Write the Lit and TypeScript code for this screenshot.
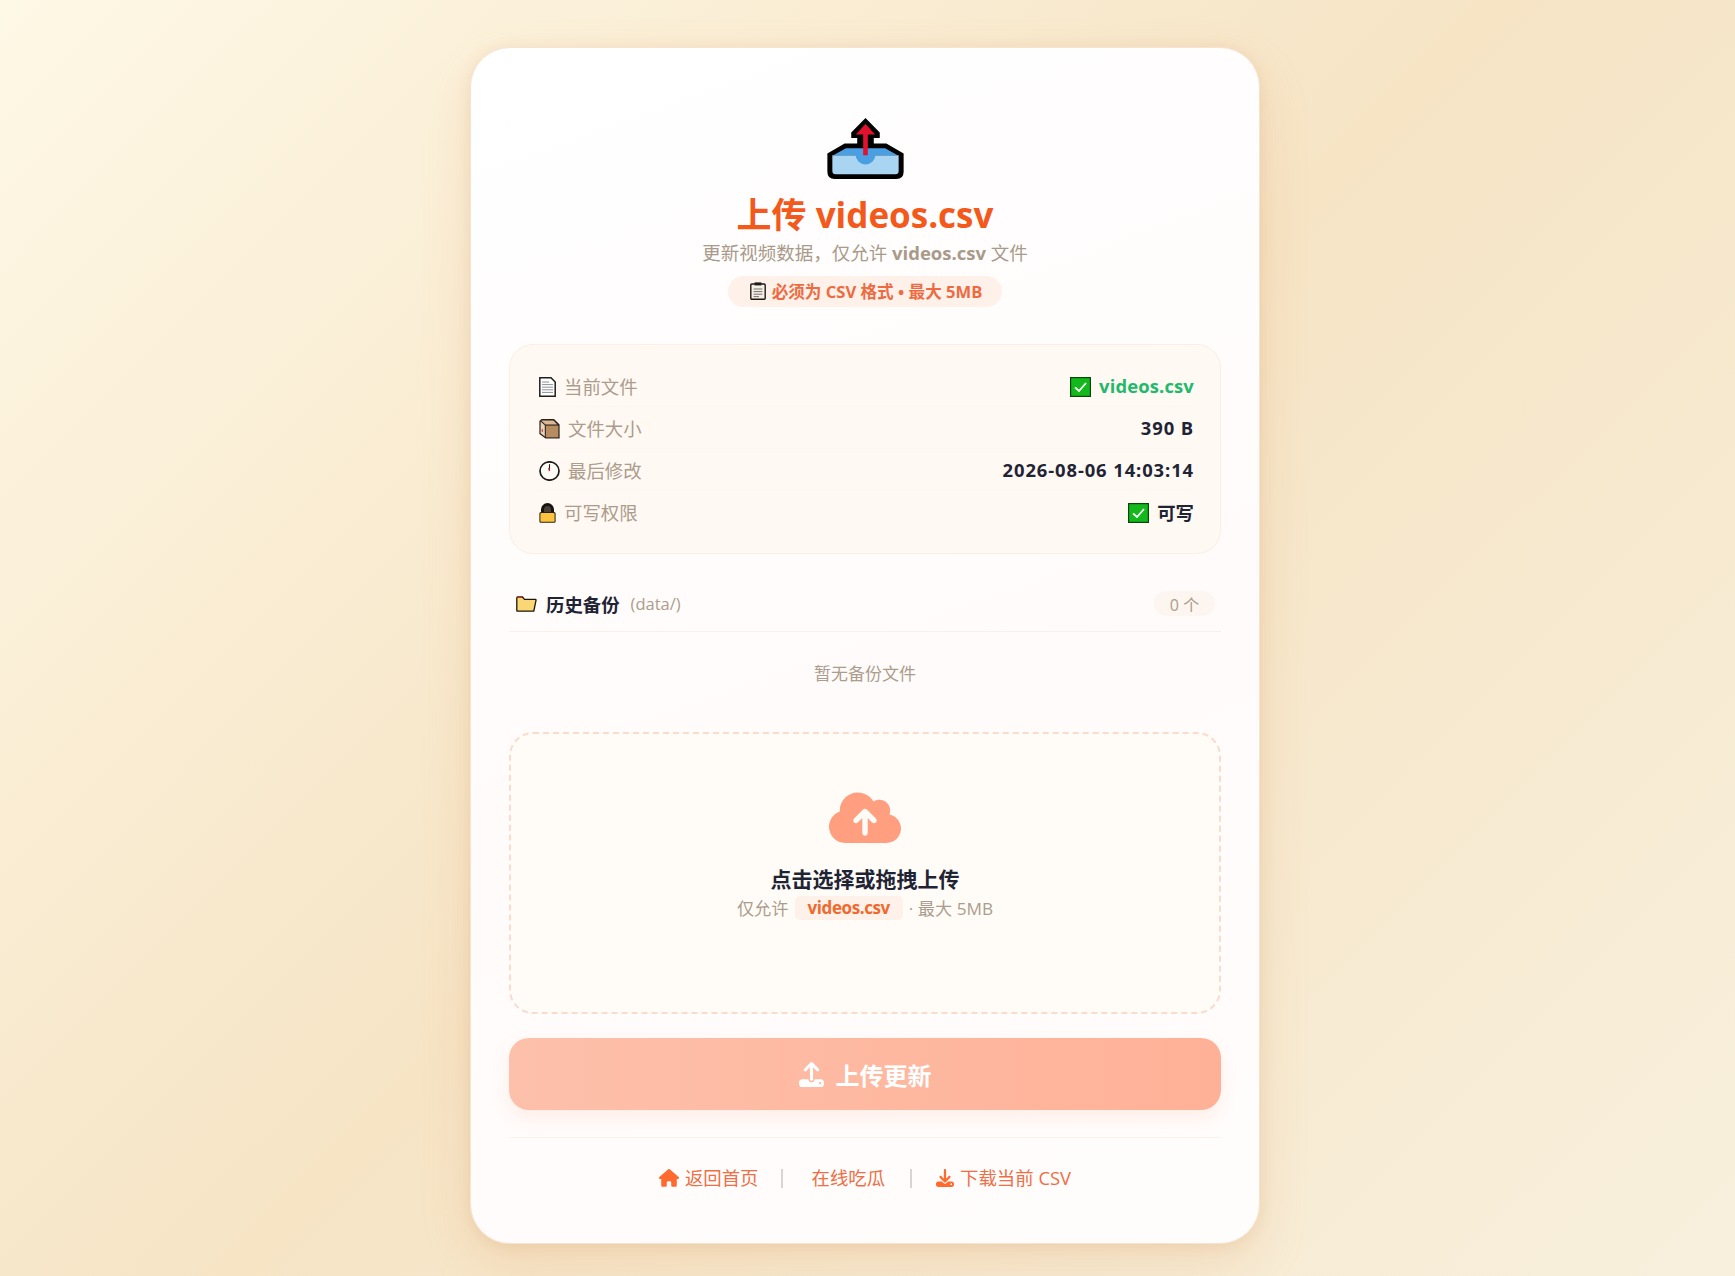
import { LitElement, html, css, svg } from "lit";
import { customElement } from "lit/decorators.js";

const fa = (vb: string, d: string, cls: string) =>
  html`<svg class=${cls} viewBox=${vb} fill="currentColor" aria-hidden="true">${svg`<path d=${d}></path>`}</svg>`;

const CLOUD = "M144 480C64.5 480 0 415.5 0 336c0-62.8 40.2-116.2 96.3-135.9c-.2-2.7-.3-5.3-.3-8.1c0-88.4 71.6-160 160-160c59.3 0 111 32.2 138.7 80.2C409.9 102 428.3 96 448 96c53 0 96 43 96 96c0 12.2-2.3 23.8-6.4 34.6C596 238.4 640 290.1 640 352c0 70.7-57.3 128-128 128H144zm79-217c-9.4 9.4-9.4 24.6 0 33.9s24.6 9.4 33.9 0l39-39V392c0 13.3 10.7 24 24 24s24-10.7 24-24V257.9l39 39c9.4 9.4 24.6 9.4 33.9 0s9.4-24.6 0-33.9l-80-80c-9.4-9.4-24.6-9.4-33.9 0l-80 80z";
const HOME = "M575.8 255.5c0 18-15 32.1-32 32.1h-32l.7 160.2c0 2.7-.2 5.4-.5 8.1V472c0 22.1-17.9 40-40 40H456c-1.1 0-2.2 0-3.3-.1c-1.4 .1-2.8 .1-4.2 .1H416 392c-22.1 0-40-17.9-40-40V448 384c0-17.7-14.3-32-32-32H256c-17.7 0-32 14.3-32 32v64 24c0 22.1-17.9 40-40 40H160 128.1c-1.5 0-3-.1-4.5-.2c-1.2 .1-2.4 .2-3.6 .2H104c-22.1 0-40-17.9-40-40V360c0-.9 0-1.9 .1-2.8V287.6H32c-18 0-32-14-32-32.1c0-9 3-17 10-24L266.4 8c7-7 15-8 22-8s15 2 21 7L564.8 231.5c8 7 12 15 11 24z";
const DOWNLOAD = "M288 32c0-17.7-14.3-32-32-32s-32 14.3-32 32V274.7l-73.4-73.4c-12.5-12.5-32.8-12.5-45.3 0s-12.5 32.8 0 45.3l128 128c12.5 12.5 32.8 12.5 45.3 0l128-128c12.5-12.5 12.5-32.8 0-45.3s-32.8-12.5-45.3 0L288 274.7V32zM64 352c-35.3 0-64 28.7-64 64v32c0 35.3 28.7 64 64 64H448c35.3 0 64-28.7 64-64V416c0-35.3-28.7-64-64-64H346.5l-45.3 45.3c-25 25-65.5 25-90.5 0L165.5 352H64zm368 56a24 24 0 1 1 0 48 24 24 0 1 1 0-48z";
const UPLOAD = "M288 109.3V352c0 17.7-14.3 32-32 32s-32-14.3-32-32V109.3l-73.4 73.4c-12.5 12.5-32.8 12.5-45.3 0s-12.5-32.8 0-45.3l128-128c12.5-12.5 32.8-12.5 45.3 0l128 128c12.5 12.5 12.5 32.8 0 45.3s-32.8 12.5-45.3 0L288 109.3zM64 352H192c0 35.3 28.7 64 64 64s64-28.7 64-64H448c35.3 0 64 28.7 64 64v32c0 35.3-28.7 64-64 64H64c-35.3 0-64-28.7-64-64V416c0-35.3 28.7-64 64-64zM432 456a24 24 0 1 0 0-48 24 24 0 1 0 0 48z";

const outbox = html`<svg class="hero" viewBox="50 38 230 184" aria-hidden="true">
  <path fill="#000" d="M165 38L208 82V98H190V115H228L280 145V200Q280 222 258 222H72Q50 222 50 200V145L102 115H140V98H122V82Z"/>
  <path fill="#a9d4f2" d="M65 150H265V198Q265 208 255 208H75Q65 208 65 198Z"/>
  <path fill="#4a9fe2" d="M106 129H224L262 150H68Z"/>
  <path fill="#4a9fe2" d="M135 148H195A30 30 0 0 1 135 148Z"/>
  <path fill="#e2122e" d="M165 56L194 88H172V150H158V88H136Z"/>
</svg>`;

const doc = html`<svg class="ei w17" viewBox="0 0 17 20" aria-hidden="true">
  <path fill="#fff" stroke="#1f1f1f" stroke-width="1.5" d="M.8.8H12L16.2 5V19.2H.8Z"/>
  <path fill="none" stroke="#8d9298" stroke-width="1" d="M3 5H10M3 7.6H14M3 10.2H14M3 12.8H14M3 15.4H14"/>
</svg>`;
const pkg = html`<svg class="ei w21" viewBox="0 0 21 20" aria-hidden="true">
  <path fill="#2a2018" d="M2.5 0H15L20.6 5.5V19.6H6.5L.4 15V2Z"/>
  <path fill="#dcb995" d="M2 1.6H14.4L18.4 5.4H6.5Z"/>
  <path fill="#ead2b8" d="M1.6 2.6L5.8 6.2V17.6L1.6 14.2Z"/>
  <path fill="#b78c62" d="M6.8 6.6H19.4V18.4H6.8Z"/>
  <path fill="#c8392f" d="M2.8 10H3.8V13H2.8Z"/>
</svg>`;
const clock = html`<svg class="ei w21" viewBox="0 0 21 20" aria-hidden="true">
  <ellipse cx="10.5" cy="10" rx="9.5" ry="9.2" fill="#fffdf8" stroke="#1d1d1d" stroke-width="1.7"/>
  <path stroke="#1d1d1d" stroke-width="1.1" fill="none" d="M10.5 3.2V10"/>
  <path stroke="#d22f3c" stroke-width="1.2" fill="none" d="M10.5 10L9.6 7"/>
</svg>`;
const lock = html`<svg class="ei w17" viewBox="0 0 17 20" aria-hidden="true">
  <path fill="#141414" d="M2 10V6.5A6.5 6.5 0 0 1 15 6.5V10Z"/>
  <path fill="#4a4036" d="M5 9V7A3.5 4 0 0 1 12 7V9Z"/>
  <rect x=".4" y="9" width="16.2" height="10.8" rx="1.6" fill="#2a1f08"/>
  <rect x="1.4" y="10" width="14.2" height="8.8" rx=".9" fill="#fcc33f"/>
</svg>`;
const check = html`<svg class="ei w21" viewBox="0 0 21 20" aria-hidden="true">
  <rect x=".6" y=".6" width="19.8" height="18.8" fill="#12b81c" stroke="#0b470d" stroke-width="1.2"/>
  <path d="M5 10.4L9 14L16 6" fill="none" stroke="#fff" stroke-width="1.8"/>
</svg>`;
const folder = html`<svg class="ei folder" viewBox="0 0 21 16" aria-hidden="true">
  <path fill="#fbd675" stroke="#1d1608" stroke-width="1.3" d="M.8 14.6V2Q.8 1 1.8 1H6.5L8.5 3.4H19.4Q20.2 3.4 20 4.4L17.8 15.2H1.4Q.8 15.2 .8 14.6Z"/>
  <path fill="#c9322c" d="M1.6 .6H6V1.8H1.6Z"/>
</svg>`;
const clip = html`<svg class="ei clip" viewBox="0 0 16 18" aria-hidden="true">
  <rect x=".8" y="2" width="14.4" height="15.2" rx="1" fill="#f4efe6" stroke="#1e1b16" stroke-width="1.4"/>
  <rect x="4.6" y=".4" width="6.8" height="3" fill="#1e1b16"/>
  <path fill="none" stroke="#77716a" stroke-width="1" d="M3.6 7H12.4M3.6 9.6H12.4M3.6 12.2H12.4M3.6 14.6H9"/>
</svg>`;

@customElement("app-root")
export class AppRoot extends LitElement {
  static styles = css`
    :host {
      display: block;
      min-height: 100vh;
      box-sizing: border-box;
      padding: 47px 5px 32px 0;
      background: linear-gradient(135deg, #fef8e6 0%, #f6e4c5 50%, #f8f0dd 100%);
      font-family: "Open Sans", "Noto Sans CJK SC", "Noto Sans", sans-serif;
      color: #1f2435;
    }
    * { box-sizing: border-box; }
    .card {
      width: 790px;
      height: 1197px;
      margin: 0 auto;
      padding: 70px 38px 0;
      background: linear-gradient(160deg, #ffffff 0%, #fffbfa 55%, #fffdfc 100%);
      border: 1px solid #f8e3d2;
      border-radius: 40px;
      box-shadow: 0 20px 50px rgba(224, 150, 90, 0.2), 0 2px 14px rgba(190, 140, 80, 0.16);
    }
    .hero { display: block; width: 77px; height: 61px; margin: 0 auto; }
    h1 {
      margin: 14px 0 0;
      font-size: 35px;
      line-height: 44px;
      font-weight: 700;
      text-align: center;
      color: #f4591c;
    }
    .sub {
      margin: 2px 0 0;
      font-size: 18.5px;
      line-height: 28px;
      text-align: center;
      color: #a99a8a;
    }
    .sub b { font-weight: 700; color: #a99a8a; }
    .badge-wrap { display: flex; justify-content: center; margin-top: 9px; }
    .badge {
      display: flex;
      align-items: center;
      gap: 6px;
      height: 31px;
      padding: 0 20px 1px 22px;
      border-radius: 16px;
      background: #fdf1ea;
      color: #ee6b42;
      font-size: 16.6px;
      font-weight: 700;
    }
    .ei { display: block; flex: none; }
    .w17 { width: 17px; height: 20px; }
    .w21 { width: 21px; height: 20px; }
    .row .ei { margin-top: 2px; }
    .folder { width: 21px; height: 16px; }
    .clip { width: 16px; height: 18px; }
    .info {
      margin-top: 37px;
      height: 210px;
      padding: 20px 26px 0 29px;
      border: 1px solid #fbeee4;
      border-radius: 24px;
      background: linear-gradient(135deg, #fff8f3, #fff9f4);
    }
    .row {
      display: flex;
      align-items: center;
      justify-content: space-between;
      height: 42px;
      border-bottom: 1px solid #fef6f1;
    }
    .row:last-child { border-bottom: 0; }
    .k, .v { display: flex; align-items: center; }
    .k { gap: 8px; font-size: 18.4px; color: #ab9c8c; }
    .v { gap: 8px; font-size: 18.4px; font-weight: 700; letter-spacing: 0.9px; color: #1f2435; }
    .v.ok { color: #22b96b; letter-spacing: 0.15px; }
    .v.cjk { letter-spacing: 0; }
    .hist {
      display: flex;
      align-items: center;
      margin-top: 37px;
      height: 41px;
      padding: 0 6px 15px 7px;
      border-bottom: 1px solid #fcefe9;
    }
    .hist .ttl { margin-left: 9px; font-size: 18.4px; font-weight: 700; }
    .hist .path { margin-left: 11px; font-size: 16.5px; color: #ab9c8c; }
    .count {
      margin-left: auto;
      width: 61px;
      height: 25px;
      display: flex;
      align-items: center;
      justify-content: center;
      border-radius: 13px;
      background: #fdf5ef;
      color: #ab9c8c;
      font-size: 16px;
    }
    .empty {
      padding-top: 30px;
      font-size: 17px;
      line-height: 24px;
      text-align: center;
      color: #ab9c8c;
    }
    .drop {
      margin-top: 46px;
      height: 282px;
      padding-top: 55px;
      border: 2px dashed #f9dccd;
      border-radius: 24px;
      background: #fffcf8;
      text-align: center;
    }
    .cloud { display: block; width: 72px; height: 57.6px; margin: 0 auto; color: #ff9f80; }
    .drop h2 { margin: 17px 0 0; font-size: 21px; line-height: 30px; font-weight: 700; }
    .hint {
      display: flex;
      justify-content: center;
      align-items: center;
      margin-top: 1px;
      height: 26px;
      font-size: 17.2px;
      color: #ab9c8c;
    }
    .chip {
      margin: 0 6px;
      padding: 0 13px;
      height: 24px;
      line-height: 24px;
      border-radius: 5px;
      background: #fdf1ea;
      color: #ee6b2f;
      font-size: 17px;
      letter-spacing: -0.4px;
      font-weight: 700;
    }
    .btn {
      display: flex;
      align-items: center;
      justify-content: center;
      gap: 12px;
      margin-top: 24px;
      height: 72px;
      border-radius: 20px;
      background: linear-gradient(90deg, #fdc0ab, #ffb197);
      box-shadow: 0 8px 18px rgba(255, 150, 110, 0.14);
      color: #fff;
      font-size: 24px;
      font-weight: 700;
    }
    .btn svg { display: block; width: 25px; height: 25px; }
    .foot {
      display: flex;
      align-items: center;
      justify-content: center;
      margin-top: 27px;
      padding-top: 26px;
      border-top: 1px solid #fbf1ea;
      height: 55px;
      font-size: 18.4px;
      line-height: 28px;
      color: #ee6e45;
    }
    .foot a { display: flex; align-items: center; gap: 6px; color: inherit; text-decoration: none; }
    .foot svg { display: block; }
    .ic-home { width: 20px; height: 17.8px; color: #ff6a2f; }
    .ic-dl { width: 18px; height: 18px; color: #ff6a2f; }
    .bar { width: 2px; height: 19px; margin: 0 24px 0 25px; background: #d8d4cf; }
    .bar.first { margin: 0 29px 0 22px; }
  `;

  render() {
    return html`
      <main class="card">
        ${outbox}
        <h1>上传 videos.csv</h1>
        <p class="sub">更新视频数据，仅允许 <b>videos.csv</b> 文件</p>
        <div class="badge-wrap">
          <div class="badge">${clip}<span>必须为 CSV 格式 • 最大 5MB</span></div>
        </div>

        <section class="info">
          <div class="row">
            <span class="k">${doc}当前文件</span>
            <span class="v ok">${check}videos.csv</span>
          </div>
          <div class="row">
            <span class="k">${pkg}文件大小</span>
            <span class="v">390 B</span>
          </div>
          <div class="row">
            <span class="k">${clock}最后修改</span>
            <span class="v">2026-08-06 14:03:14</span>
          </div>
          <div class="row">
            <span class="k">${lock}可写权限</span>
            <span class="v cjk">${check}可写</span>
          </div>
        </section>

        <div class="hist">
          ${folder}
          <span class="ttl">历史备份</span>
          <span class="path">(data/)</span>
          <span class="count">0 个</span>
        </div>
        <div class="empty">暂无备份文件</div>

        <section class="drop">
          ${fa("0 0 640 512", CLOUD, "cloud")}
          <h2>点击选择或拖拽上传</h2>
          <div class="hint">
            <span>仅允许</span>
            <span class="chip">videos.csv</span>
            <span>· 最大 5MB</span>
          </div>
        </section>

        <div class="btn">${fa("0 0 512 512", UPLOAD, "")}<span>上传更新</span></div>

        <nav class="foot">
          <a href="#">${fa("0 0 576 512", HOME, "ic-home")}返回首页</a>
          <span class="bar first"></span>
          <a href="#">在线吃瓜</a>
          <span class="bar"></span>
          <a href="#">${fa("0 0 512 512", DOWNLOAD, "ic-dl")}下载当前 CSV</a>
        </nav>
      </main>
    `;
  }
}
